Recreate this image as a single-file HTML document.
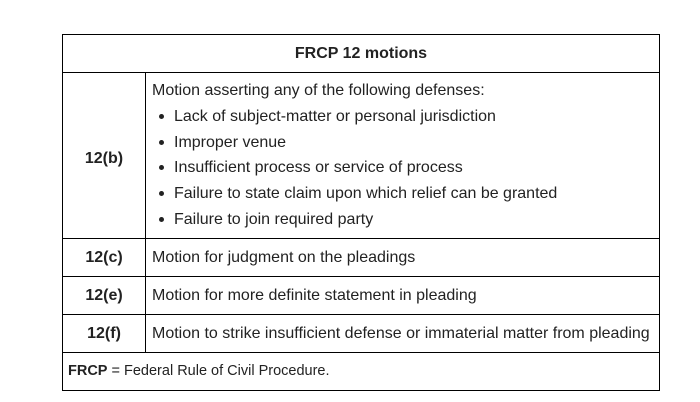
<!DOCTYPE html>
<html><head><style>
body{margin:0;width:700px;height:402px;background:#fff;font-family:"Liberation Sans",Arial,sans-serif;color:#222;position:relative;overflow:hidden}
.l{position:absolute;background:#000}
.t{position:absolute;font-size:16px;white-space:nowrap;line-height:18px}
.b{font-weight:bold}
.c{width:82px;left:63px;text-align:center}
.d{position:absolute;left:159px;width:5px;height:5px;border-radius:50%;background:#222}
</style></head><body>
<div class="l" style="left:62px;top:34px;width:598px;height:1px"></div>
<div class="l" style="left:62px;top:72px;width:598px;height:1px"></div>
<div class="l" style="left:62px;top:238px;width:598px;height:1px"></div>
<div class="l" style="left:62px;top:276px;width:598px;height:1px"></div>
<div class="l" style="left:62px;top:314px;width:598px;height:1px"></div>
<div class="l" style="left:62px;top:352px;width:598px;height:1px"></div>
<div class="l" style="left:62px;top:390px;width:598px;height:1px"></div>
<div class="l" style="left:62px;top:34px;width:1px;height:357px"></div>
<div class="l" style="left:659px;top:34px;width:1px;height:357px"></div>
<div class="l" style="left:145px;top:72px;width:1px;height:281px"></div>
<div class="t b" style="left:62px;width:598px;text-align:center;top:45px">FRCP 12 motions</div>
<div class="t b c" style="top:150px">12(b)</div>
<div class="t" style="left:152px;top:82px">Motion asserting any of the following defenses:</div>
<div class="d" style="top:114px"></div><div class="t" style="left:174px;top:108px">Lack of subject-matter or personal jurisdiction</div>
<div class="d" style="top:140px"></div><div class="t" style="left:174px;top:134px">Improper venue</div>
<div class="d" style="top:165px"></div><div class="t" style="left:174px;top:159px">Insufficient process or service of process</div>
<div class="d" style="top:191px"></div><div class="t" style="left:174px;top:185px">Failure to state claim upon which relief can be granted</div>
<div class="d" style="top:217px"></div><div class="t" style="left:174px;top:211px">Failure to join required party</div>
<div class="t b c" style="top:249px">12(c)</div>
<div class="t" style="left:152px;top:249px">Motion for judgment on the pleadings</div>
<div class="t b c" style="top:287px">12(e)</div>
<div class="t" style="left:152px;top:287px">Motion for more definite statement in pleading</div>
<div class="t b c" style="top:325px">12(f)</div>
<div class="t" style="left:152px;top:325px">Motion to strike insufficient defense or immaterial matter from pleading</div>
<div class="t" style="left:68px;top:362px;font-size:14.5px"><b>FRCP</b> = Federal Rule of Civil Procedure.</div>
</body></html>
